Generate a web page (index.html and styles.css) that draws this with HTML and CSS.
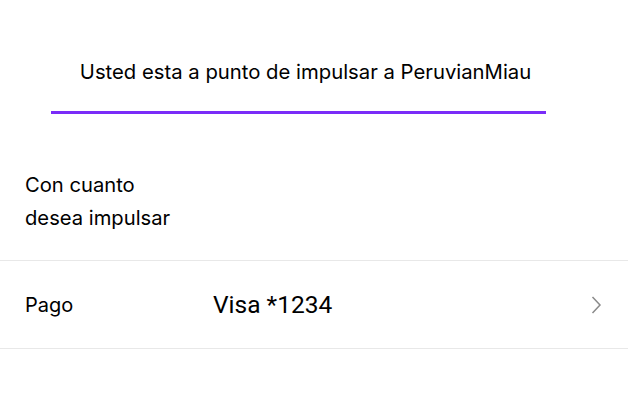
FILE: index.html
```html
<!DOCTYPE html>
<html lang="es">
<head>
<meta charset="utf-8">
<link rel="stylesheet" href="styles.css">
</head>
<body>
<div class="page">
  <header class="tab">
    <div class="tab-title">Usted esta a punto de impulsar a PeruvianMiau</div>
    <div class="tab-bar"></div>
  </header>
  <section class="amount">
    <div class="amount-label">Con cuanto<br>desea impulsar</div>
  </section>
  <section class="row">
    <div class="row-label">Pago</div>
    <div class="row-value">Visa *1234</div>
    <svg class="chev" width="12" height="20" viewBox="0 0 12 20"><path d="M2.5 2 L10 10 L2.5 18" fill="none" stroke="#8a8a8a" stroke-width="1.5"/></svg>
  </section>
</div>
</body>
</html>
```
FILE: styles.css
```css
* { box-sizing: border-box; }
html, body { margin: 0; padding: 0; background: #fff; }
body { font-family: Inter, "Noto Sans", sans-serif; color: #000; }
.page { width: 628px; }
.tab { padding: 58px 82px 0 51px; }
.tab-title { font-size: 20.3px; line-height: 28px; text-align: center; padding-left: 14px; }
.tab-bar { height: 3px; background: #7a2cf8; margin-top: 25px; }
.amount { padding: 54px 25px 0; height: 147px; border-bottom: 1px solid #e8e8e8; }
.amount-label { font-size: 20.2px; line-height: 33px; }
.row { display: flex; align-items: center; height: 88px; padding: 0 26px 0 25px; border-bottom: 1px solid #e8e8e8; }
.row-label { width: 188px; font-size: 20px; }
.row-value { flex: 1; font-family: Roboto, sans-serif; font-size: 24.5px; }
.chev { display: block; }
```
